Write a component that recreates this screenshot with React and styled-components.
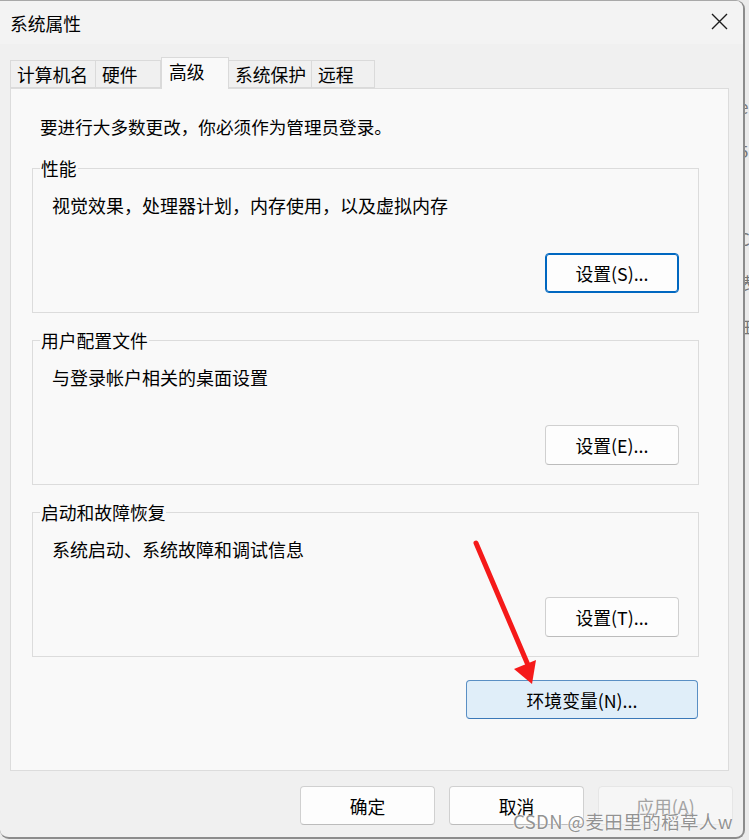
import styled, { createGlobalStyle } from "styled-components";

const GlobalStyle = createGlobalStyle`
  html, body {
    margin: 0;
    padding: 0;
    background: #ebebeb;
  }
  * {
    box-sizing: border-box;
  }
`;

const font = `"Microsoft YaHei UI", "Noto Sans CJK SC", "Noto Sans", sans-serif`;

const Page = styled.div`
  display: flex;
  width: 749px;
  height: 840px;
  overflow: hidden;
  font-family: ${font};
`;

const Behind = styled.div`
  flex: 1;
  height: 840px;
  display: flex;
  flex-direction: column;
  gap: 22px;
  padding-top: 96px;
  color: #777;
  font-size: 17px;
  line-height: 22px;
  overflow: hidden;
  white-space: nowrap;
  margin-left: -6px;
`;

const Window = styled.div`
  position: relative;
  flex: 0 0 745px;
  height: 839px;
  background: #f0f0f0;
  border-top: 1px solid #a8a8a8;
  border-right: 2px solid #8c8c8c;
  border-bottom: 2px solid #8c8c8c;
  border-radius: 0 9px 9px 9px;
  overflow: hidden;
  display: flex;
  flex-direction: column;
  z-index: 1;
`;

const TitleBar = styled.div`
  height: 43px;
  flex-shrink: 0;
  display: flex;
  align-items: center;
  justify-content: space-between;
  padding: 0 15px 0 10px;
  background: #f3f3f3;
`;

const Title = styled.span`
  font-size: 17.8px;
  color: #000;
  line-height: 24px;
`;

const CloseIcon = styled.svg`
  width: 17px;
  height: 17px;
  margin-top: -2px;
`;

const Body = styled.div`
  flex: 1;
  display: flex;
  flex-direction: column;
  padding: 13px 0 0 10px;
`;

const Tabs = styled.div`
  display: flex;
  align-items: flex-end;
  height: 31px;
  position: relative;
  z-index: 2;
`;

const Tab = styled.div`
  width: ${(p) => p.$w}px;
  height: ${(p) => (p.$active ? 32 : 28)}px;
  margin-bottom: ${(p) => (p.$active ? -1 : 0)}px;
  padding: ${(p) => (p.$active ? "0 0 5px 7px" : "0 0 0 6px")};
  display: flex;
  align-items: center;
  background: ${(p) => (p.$active ? "#f9f9f9" : "#f0f0f0")};
  border: 1px solid #dadada;
  border-bottom: ${(p) => (p.$active ? "none" : "1px solid #dadada")};
  border-left: ${(p) => (p.$first || p.$active ? "1px solid #dadada" : "none")};
  font-size: 17.8px;
  color: #000;
  white-space: nowrap;
`;

const Panel = styled.div`
  width: 719px;
  height: 683px;
  background: #f9f9f9;
  border: 1px solid #dcdcdc;
  padding: 26px 29px 0 21px;
  display: flex;
  flex-direction: column;
`;

const Intro = styled.div`
  font-size: 17.6px;
  line-height: 24px;
  color: #000;
  padding-left: 8px;
  margin-bottom: 17px;
`;

const Group = styled.fieldset`
  margin: 0 0 15px 0;
  padding: 13px 19px 19px 19px;
  width: 667px;
  border: 1px solid #dcdcdc;
  min-width: 0;
  display: flex;
  flex-direction: column;
`;

const Legend = styled.legend`
  padding: 0 1px;
  margin-left: -12px;
  font-size: 17.8px;
  line-height: 24px;
  color: #000;
`;

const Desc = styled.div`
  font-size: 18px;
  line-height: 24px;
  color: #000;
  margin-bottom: 36px;
`;

const Button = styled.button`
  width: ${(p) => p.$w || 134}px;
  height: ${(p) => p.$h || 40}px;
  align-self: flex-end;
  display: flex;
  align-items: center;
  justify-content: center;
  padding: 0;
  border-radius: 4px;
  font-family: ${font};
  font-size: 17.8px;
  color: ${(p) => (p.$disabled ? "#a3a3a3" : "#000")};
  background: ${(p) => (p.$blue ? "#e0eef9" : p.$disabled ? "#f6f6f6" : "#fdfdfd")};
  border: 1px solid ${(p) => (p.$blue ? "#5a8fc4" : p.$disabled ? "#e6e6e6" : "#d0d0d0")};
  border-bottom-color: ${(p) => (p.$blue ? "#3b78b8" : p.$disabled ? "#e6e6e6" : "#bcbcbc")};
  box-shadow: ${(p) => (p.$focus ? "inset 0 0 0 1px #0067c0" : "none")};
  ${(p) => (p.$focus ? "border-color: #0067c0;" : "")}
`;

const EnvRow = styled.div`
  display: flex;
  justify-content: flex-end;
  margin-top: 8px;
  padding-right: 1px;
`;

const Footer = styled.div`
  display: flex;
  justify-content: flex-end;
  gap: 14px;
  padding: 15px 10px 0 0;
`;

const Watermark = styled.div`
  position: absolute;
  right: 10px;
  bottom: 4px;
  font-family: ${font};
  font-size: 18.5px;
  letter-spacing: 0.4px;
  line-height: 24px;
  color: rgba(110, 110, 110, 0.75);
  text-shadow: 0 0 1px #fff, 0 0 2px #fff;
  z-index: 5;
  white-space: nowrap;
`;

const Arrow = styled.svg`
  position: absolute;
  left: 466px;
  top: 532px;
  width: 80px;
  height: 160px;
  z-index: 4;
  overflow: visible;
`;

const tabs = [
  { label: "计算机名", w: 86, first: true },
  { label: "硬件", w: 65 },
  { label: "高级", w: 68, active: true },
  { label: "系统保护", w: 83 },
  { label: "远程", w: 63 },
];

const groups = [
  { title: "性能", desc: "视觉效果，处理器计划，内存使用，以及虚拟内存", btn: "设置(S)...", focus: true },
  { title: "用户配置文件", desc: "与登录帐户相关的桌面设置", btn: "设置(E)..." },
  { title: "启动和故障恢复", desc: "系统启动、系统故障和调试信息", btn: "设置(T)..." },
];

export default function App() {
  return (
    <Page>
      <GlobalStyle />
      <Window>
        <TitleBar>
          <Title>系统属性</Title>
          <CloseIcon viewBox="0 0 17 17">
            <path d="M1 1 L16 16 M16 1 L1 16" stroke="#1b1b1b" strokeWidth="1.4" fill="none" />
          </CloseIcon>
        </TitleBar>
        <Body>
          <Tabs>
            {tabs.map((t) => (
              <Tab key={t.label} $w={t.w} $active={t.active} $first={t.first}>
                {t.label}
              </Tab>
            ))}
          </Tabs>
          <Panel>
            <Intro>要进行大多数更改，你必须作为管理员登录。</Intro>
            {groups.map((g) => (
              <Group key={g.title}>
                <Legend>{g.title}</Legend>
                <Desc>{g.desc}</Desc>
                <Button $focus={g.focus}>{g.btn}</Button>
              </Group>
            ))}
            <EnvRow>
              <Button $blue $w={232} $h={39}>环境变量(N)...</Button>
            </EnvRow>
          </Panel>
          <Footer>
            <Button $w={135} $h={39}>确定</Button>
            <Button $w={135} $h={39}>取消</Button>
            <Button $w={135} $h={39} $disabled>应用(A)</Button>
          </Footer>
        </Body>
        <Arrow viewBox="0 0 80 160">
          <line x1="10" y1="10" x2="62" y2="132" stroke="#f51a1a" strokeWidth="5" strokeLinecap="round" />
          <polygon points="48,136 70,127 66,151" fill="#f51a1a" />
        </Arrow>
        <Watermark>CSDN @麦田里的稻草人w</Watermark>
      </Window>
      <Behind>
        <span>e</span>
        <span>5</span>
        <span>-</span>
        <span>C</span>
        <span>表</span>
        <span>田</span>
      </Behind>
    </Page>
  );
}
